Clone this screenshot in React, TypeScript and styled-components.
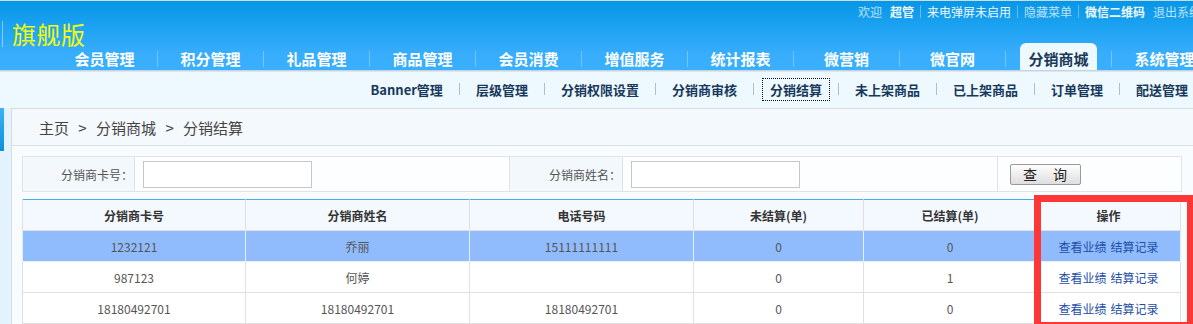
import React from "react";
import styled, { createGlobalStyle, css } from "styled-components";

const GlobalStyle = createGlobalStyle`
  html, body {
    margin: 0;
    padding: 0;
    overflow: hidden;
    background: #eef8ff;
  }
  body {
    font-family: "Noto Sans CJK SC", "Noto Sans", sans-serif;
    font-size: 13px;
    color: #555;
  }
  * { box-sizing: border-box; }
`;

// Header
const Header = styled.header`
  height: 70px;
  display: flex;
  flex-direction: column;
  overflow: hidden;
  border-top: 1px solid #c9dde9;
  background: linear-gradient(#0796e6 0%, #1ea3f2 40%, #37adfc 75%, #3aaffd 100%);
  box-shadow: 0 1px 0 #c4d3de, 0 2px 0 #dbe6ee;
  position: relative;
  z-index: 1;
`;
const TopBar = styled.div`
  height: 20px;
  display: flex;
  justify-content: flex-end;
  align-items: center;
  margin-right: -12px;
  font-size: 12px;
  white-space: nowrap;
`;
const TopLink = styled.span<{ $strong?: boolean; $dim?: boolean }>`
  color: ${({ $dim }) => ($dim ? "#bfe2f8" : "#eef8ff")};
  font-weight: ${({ $strong }) => ($strong ? 700 : 400)};
  margin: 0 4px;
`;
const TopSep = styled.span`
  width: 1px;
  height: 13px;
  background: rgba(255, 255, 255, 0.35);
  margin: 0 2px;
`;
const Logo = styled.div`
  height: 26px;
  line-height: 26px;
  margin-left: 2px;
  padding-left: 9px;
  border-left: 1px solid rgba(255, 255, 255, 0.45);
  font-size: 24px;
  color: #f4fb06;
  letter-spacing: 0.5px;
`;
const Nav = styled.nav`
  height: 27px;
  margin-top: -4px;
  padding-left: 52px;
  display: flex;
  align-items: stretch;
`;
const NavItem = styled.div<{ $active?: boolean }>`
  flex: 0 0 105px;
  display: flex;
  justify-content: center;
  align-items: center;
  padding-top: 3px;
  font-size: 15px;
  font-weight: 700;
  color: #fff;
  white-space: nowrap;
  ${({ $active }) =>
    $active &&
    css`
      margin: 0 14px;
      flex-basis: 77px;
      border-radius: 6px 6px 0 0;
      background: #eef8ff;
      color: #1b3a58;
    `}
`;
const NavSep = styled.span`
  flex: 0 0 1px;
  align-self: center;
  height: 16px;
  margin-top: 4px;
  background: rgba(255, 255, 255, 0.3);
`;

// Sub nav
const SubNav = styled.div`
  height: 38px;
  display: flex;
  justify-content: flex-end;
  align-items: center;
  padding-right: 5px;
  background: #eef8ff;
  font-size: 13px;
  font-weight: 700;
  color: #17385a;
  white-space: nowrap;
`;
const SubItem = styled.span<{ $active?: boolean }>`
  line-height: 21px;
  ${({ $active }) =>
    $active &&
    css`
      border: 1px dotted #111;
      padding: 0 7px;
      margin: 0 -8px;
    `}
`;
const SubSep = styled.span`
  width: 1px;
  height: 12px;
  margin: 0 16px;
  background: #b4bcc4;
`;

// Content
const Main = styled.div`
  display: flex;
  height: 216px;
`;
const Sidebar = styled.aside`
  flex: 0 0 11px;
  background: #e3f2fd;
`;
const SideMark = styled.div`
  width: 4px;
  height: 43px;
  background: linear-gradient(#3cb1f7, #0b91d8);
`;
const Panel = styled.section`
  flex: 1;
  border-left: 1px solid #d6dde2;
  border-top: 1px solid #d6dde2;
  background: #f9fcff;
`;
const Crumbs = styled.div`
  height: 37px;
  display: flex;
  align-items: center;
  padding-left: 27px;
  background: #f4f9fe;
  border-bottom: 1px solid #dadfe3;
  font-size: 15px;
  color: #444;
  word-spacing: 6px;
`;
const Body = styled.div`
  padding: 10px 0 0 10px;
`;

const SearchTable = styled.table`
  width: 1159px;
  table-layout: fixed;
  border-collapse: collapse;
  td {
    height: 35px;
    border: 1px solid #e0e4e8;
    padding: 0;
  }
`;
const LabelCell = styled.td`
  background: #f3f8fd;
  text-align: right;
  padding-right: 1px !important;
  color: #555;
  font-size: 12px;
`;
const FieldCell = styled.td<{ $pad?: number }>`
  background: #fdfeff;
  padding-left: ${({ $pad }) => $pad ?? 8}px !important;
`;
const TextInput = styled.input`
  display: block;
  width: 169px;
  height: 27px;
  border: 1px solid #c6c6c6;
  background: #fff;
  outline: none;
`;
const SearchButton = styled.button`
  display: block;
  width: 71px;
  height: 21px;
  padding: 0;
  border: 1px solid #9a9a9a;
  border-radius: 2px;
  background: linear-gradient(#fefefe, #dedede);
  font-family: inherit;
  font-size: 14px;
  color: #222;
  line-height: 18px;
  letter-spacing: 1px;
`;

const DataWrap = styled.div`
  position: relative;
  margin-top: 7px;
`;
const DataTable = styled.table`
  width: 1158px;
  table-layout: fixed;
  border-collapse: collapse;
  border-top: 1px solid #4aaaea;
  font-size: 12px;
  th, td {
    height: 31px;
    border: 1px solid #e0e0e0;
    text-align: center;
    padding: 0;
    white-space: nowrap;
  }
  th {
    background: #f3f9fe;
    border-top: none;
    font-weight: 700;
    color: #333;
  }
  td {
    color: #555;
  }
`;
const Row = styled.tr<{ $selected?: boolean }>`
  background: ${({ $selected }) => ($selected ? "#90bcfe" : "#fff")};
  td {
    border-color: ${({ $selected }) => ($selected ? "#e6eef8" : "#e0e0e0")};
  }
`;
const ActionLink = styled.a`
  color: #1d4ea6;
  text-decoration: none;
  margin: 0 2px;
`;
const Highlight = styled.div`
  position: absolute;
  left: 1012px;
  top: -4px;
  width: 160px;
  height: 134px;
  border: 7px solid #fd3636;
  pointer-events: none;
`;

const mainTabs = [
  "会员管理",
  "积分管理",
  "礼品管理",
  "商品管理",
  "会员消费",
  "增值服务",
  "统计报表",
  "微营销",
  "微官网",
  "分销商城",
  "系统管理",
];
const subTabs = [
  "Banner管理",
  "层级管理",
  "分销权限设置",
  "分销商审核",
  "分销结算",
  "未上架商品",
  "已上架商品",
  "订单管理",
  "配送管理",
];

const rows = [
  { card: "1232121", name: "乔丽", phone: "15111111111", open: "0", done: "0" },
  { card: "987123", name: "何婷", phone: "", open: "0", done: "1" },
  { card: "18180492701", name: "18180492701", phone: "18180492701", open: "0", done: "0" },
];

const App = () => {
  return (
    <>
      <GlobalStyle />
      <Header>
        <TopBar>
          <TopLink $dim>欢迎</TopLink>
          <TopLink $strong>超管</TopLink>
          <TopSep />
          <TopLink>来电弹屏未启用</TopLink>
          <TopSep />
          <TopLink $dim>隐藏菜单</TopLink>
          <TopSep />
          <TopLink $strong>微信二维码</TopLink>
          <TopLink $dim>退出系统</TopLink>
        </TopBar>
        <Logo>旗舰版</Logo>
        <Nav>
          {mainTabs.map((t, i) => (
            <React.Fragment key={t}>
              {i > 0 && <NavSep />}
              <NavItem $active={t === "分销商城"}>{t}</NavItem>
            </React.Fragment>
          ))}
        </Nav>
      </Header>
      <SubNav>
        {subTabs.map((t, i) => (
          <React.Fragment key={t}>
            {i > 0 && <SubSep />}
            <SubItem $active={t === "分销结算"}>{t}</SubItem>
          </React.Fragment>
        ))}
      </SubNav>
      <Main>
        <Sidebar>
          <SideMark />
        </Sidebar>
        <Panel>
          <Crumbs>主页 &gt; 分销商城 &gt; 分销结算</Crumbs>
          <Body>
            <SearchTable>
              <colgroup>
                <col style={{ width: 112 }} />
                <col style={{ width: 375 }} />
                <col style={{ width: 113 }} />
                <col style={{ width: 375 }} />
                <col style={{ width: 184 }} />
              </colgroup>
              <tbody>
                <tr>
                  <LabelCell>分销商卡号：</LabelCell>
                  <FieldCell>
                    <TextInput />
                  </FieldCell>
                  <LabelCell>分销商姓名：</LabelCell>
                  <FieldCell>
                    <TextInput />
                  </FieldCell>
                  <FieldCell $pad={12}>
                    <SearchButton>查　询</SearchButton>
                  </FieldCell>
                </tr>
              </tbody>
            </SearchTable>
            <DataWrap>
              <DataTable>
                <colgroup>
                  <col style={{ width: 223 }} />
                  <col style={{ width: 224 }} />
                  <col style={{ width: 224 }} />
                  <col style={{ width: 170 }} />
                  <col style={{ width: 173 }} />
                  <col style={{ width: 144 }} />
                </colgroup>
                <thead>
                  <tr>
                    <th>分销商卡号</th>
                    <th>分销商姓名</th>
                    <th>电话号码</th>
                    <th>未结算(单)</th>
                    <th>已结算(单)</th>
                    <th>操作</th>
                  </tr>
                </thead>
                <tbody>
                  {rows.map((r, i) => (
                    <Row key={r.card} $selected={i === 0}>
                      <td>{r.card}</td>
                      <td>{r.name}</td>
                      <td>{r.phone}</td>
                      <td>{r.open}</td>
                      <td>{r.done}</td>
                      <td>
                        <ActionLink href="#">查看业绩</ActionLink>
                        <ActionLink href="#">结算记录</ActionLink>
                      </td>
                    </Row>
                  ))}
                </tbody>
              </DataTable>
              <Highlight />
            </DataWrap>
          </Body>
        </Panel>
      </Main>
    </>
  );
};

export default App;
